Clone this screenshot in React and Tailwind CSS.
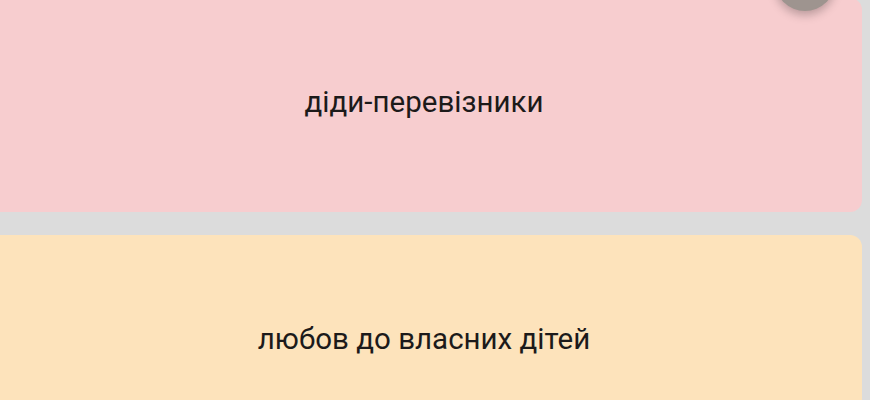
export default function App() {
  const cards = [
    { label: "діди-перевізники", bg: "bg-[#f7cdcf]" },
    { label: "любов до власних дітей", bg: "bg-[#fde3bb]" },
  ];

  return (
    <div className="relative h-[400px] w-[870px] overflow-hidden bg-[#dcdcdc] font-['Roboto',sans-serif]">
      <div className="-mt-[2px] -ml-[14px] mr-[8px] flex flex-col gap-[23px]">
        {cards.map((c) => (
          <div
            key={c.label}
            className={`flex h-[214px] items-center justify-center rounded-[12px] pb-[6px] ${c.bg}`}
          >
            <span className="text-[29.5px] text-[#1c1a1a]">{c.label}</span>
          </div>
        ))}
      </div>
      {/* floating action button peeking from the top */}
      <div className="absolute left-[775px] top-[-49px] h-[60px] w-[60px] rounded-full bg-[#9e948f] shadow-[0_4px_10px_rgba(0,0,0,0.25)]" />
    </div>
  );
}
